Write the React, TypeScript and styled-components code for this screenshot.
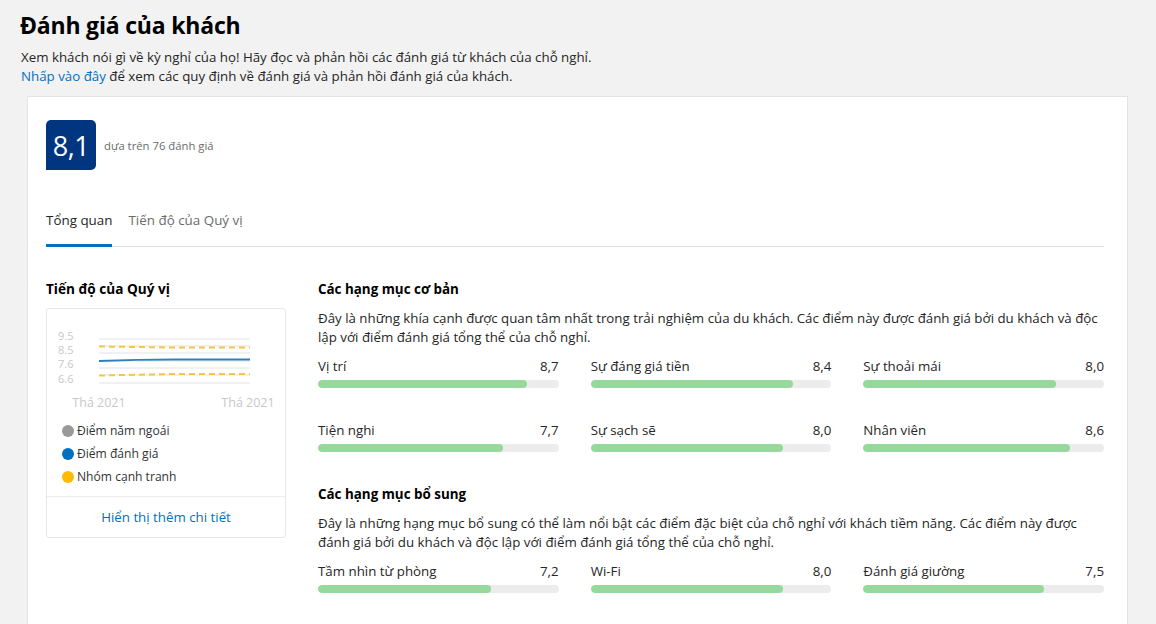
import React from "react";
import styled, { createGlobalStyle } from "styled-components";

const Global = createGlobalStyle`
  html, body { margin: 0; padding: 0; }
  body {
    background: #f2f2f2;
    font-family: "Open Sans", "Noto Sans", Arial, sans-serif;
    color: #262626;
    -webkit-font-smoothing: antialiased;
  }
`;

const Page = styled.div`
  padding: 10px 28px 0 20px;
`;

const Title = styled.h1`
  margin: 0;
  font-size: 23px;
  line-height: 30px;
  font-weight: 700;
  color: #000;
  letter-spacing: -0.2px;
`;

const Intro = styled.p`
  margin: 8px 0 0 1px;
  font-size: 13.3px;
  line-height: 19px;
  color: #262626;
`;

const Link = styled.a`
  color: #0071c2;
  text-decoration: none;
`;

const Card = styled.section`
  margin: 10px 0 0 7px;
  background: #fff;
  border: 1px solid #e3e3e3;
  padding: 23px 23px 40px 18px;
  min-height: 560px;
  box-sizing: border-box;
`;

const ScoreRow = styled.div`
  display: flex;
  align-items: center;
  gap: 8px;
`;

const Badge = styled.div`
  width: 50px;
  height: 50px;
  background: #003580;
  color: #fff;
  border-radius: 5px 5px 5px 0;
  display: flex;
  align-items: center;
  justify-content: center;
  font-size: 27px;
  letter-spacing: -0.5px;
`;

const Based = styled.span`
  font-size: 11.3px;
  color: #6b6b6b;
`;

const Tabs = styled.div`
  display: flex;
  gap: 16px;
  margin-top: 40px;
  border-bottom: 1px solid #dcdcdc;
`;

const Tab = styled.div<{ $active?: boolean }>`
  font-size: 13.4px;
  line-height: 20px;
  padding-bottom: 14px;
  margin-bottom: -1px;
  color: ${(p) => (p.$active ? "#262626" : "#6b6b6b")};
  border-bottom: 3px solid ${(p) => (p.$active ? "#0071c2" : "transparent")};
`;

const Body = styled.div`
  display: grid;
  grid-template-columns: 240px 1fr;
  gap: 32px;
  margin-top: 32px;
`;

const SideTitle = styled.h3`
  margin: 0;
  font-size: 13.6px;
  line-height: 20px;
  font-weight: 700;
  color: #000;
`;

const SideCard = styled.div`
  margin-top: 9px;
  border: 1px solid #e6e6e6;
  border-radius: 3px;
  display: flex;
  flex-direction: column;
`;

const Chart = styled.svg`
  display: block;
  margin-top: 10px;
`;

const Legend = styled.ul`
  list-style: none;
  margin: 9px 0 0;
  padding: 0 0 0 15px;
  display: flex;
  flex-direction: column;
  gap: 3px;
`;

const LegendItem = styled.li`
  display: flex;
  align-items: center;
  gap: 3px;
  font-size: 12.1px;
  line-height: 20px;
  color: #333;
`;

const Dot = styled.span<{ $c: string }>`
  width: 12px;
  height: 12px;
  border-radius: 50%;
  background: ${(p) => p.$c};
`;

const More = styled.a`
  margin-top: 9px;
  border-top: 1px solid #ececec;
  text-align: center;
  font-size: 13.3px;
  line-height: 20px;
  padding: 10px 0 10px;
  color: #0071c2;
  text-decoration: none;
`;

const Main = styled.div`
  display: flex;
  flex-direction: column;
`;

const Section = styled.div`
  & + & {
    margin-top: 32px;
  }
`;

const SectionTitle = styled.h3`
  margin: 0;
  font-size: 13.4px;
  line-height: 20px;
  font-weight: 700;
  color: #000;
`;

const Desc = styled.p`
  margin: 10px 0 0;
  font-size: 13.3px;
  line-height: 19px;
  color: #262626;
`;

const Grid = styled.div`
  display: grid;
  grid-template-columns: repeat(3, 1fr);
  column-gap: 32px;
  row-gap: 32px;
  margin-top: 9px;
`;

const Item = styled.div`
  display: flex;
  flex-direction: column;
`;

const ItemHead = styled.div`
  display: flex;
  justify-content: space-between;
  font-size: 13.3px;
  line-height: 20px;
  color: #262626;
`;

const Track = styled.div`
  margin-top: 4px;
  height: 8px;
  border-radius: 4px;
  background: #ececec;
  overflow: hidden;
`;

const Fill = styled.div`
  height: 100%;
  border-radius: 4px;
  background: #97d89c;
`;

type Cat = { name: string; score: number };

const basic: Cat[] = [
  { name: "Vị trí", score: 8.7 },
  { name: "Sự đáng giá tiền", score: 8.4 },
  { name: "Sự thoải mái", score: 8.0 },
  { name: "Tiện nghi", score: 7.7 },
  { name: "Sự sạch sẽ", score: 8.0 },
  { name: "Nhân viên", score: 8.6 },
];

const extra: Cat[] = [
  { name: "Tầm nhìn từ phòng", score: 7.2 },
  { name: "Wi-Fi", score: 8.0 },
  { name: "Đánh giá giường", score: 7.5 },
];

const fmt = (n: number) => n.toFixed(1).replace(".", ",");

function Categories({ items }: { items: Cat[] }) {
  return (
    <Grid>
      {items.map((c) => (
        <Item key={c.name}>
          <ItemHead>
            <span>{c.name}</span>
            <span>{fmt(c.score)}</span>
          </ItemHead>
          <Track>
            <Fill style={{ width: `${c.score * 10}%` }} />
          </Track>
        </Item>
      ))}
    </Grid>
  );
}

function ProgressChart() {
  const grid = [20, 27, 34, 42, 49, 56, 64];
  const labels = [
    { t: "9.5", y: 21 },
    { t: "8.5", y: 35 },
    { t: "7.6", y: 49 },
    { t: "6.6", y: 64 },
  ];
  return (
    <Chart width={238} height={93} viewBox="0 0 238 93">
      {grid.map((y) => (
        <line key={y} x1={52} x2={203} y1={y} y2={y} stroke="#ececec" strokeWidth={1.5} />
      ))}
      {labels.map((l) => (
        <text key={l.t} x={11} y={l.y} fontSize={11} fill="#c8c8c8" fontFamily="Open Sans, sans-serif">
          {l.t}
        </text>
      ))}
      <path d="M52 27.5 L127 28.5 L203 28.5" fill="none" stroke="#f5c54a" strokeWidth={2} strokeDasharray="6 4" />
      <path d="M52 56.5 L127 55 L203 55" fill="none" stroke="#f5c54a" strokeWidth={2} strokeDasharray="6 4" />
      <path d="M52 42 Q90 40.5 127 40.5 L203 40.5" fill="none" stroke="#2f7fc1" strokeWidth={2} />
      <text x={52} y={88} fontSize={12.5} fill="#c8c8c8" textAnchor="middle" fontFamily="Open Sans, sans-serif">
        Thá 2021
      </text>
      <text x={201} y={88} fontSize={12.5} fill="#c8c8c8" textAnchor="middle" fontFamily="Open Sans, sans-serif">
        Thá 2021
      </text>
    </Chart>
  );
}

export default function App() {
  return (
    <>
      <Global />
      <Page>
        <Title>Đánh giá của khách</Title>
        <Intro>
          Xem khách nói gì về kỳ nghỉ của họ! Hãy đọc và phản hồi các đánh giá từ khách của chỗ nghỉ.
          <br />
          <Link href="#">Nhấp vào đây</Link> để xem các quy định về đánh giá và phản hồi đánh giá của khách.
        </Intro>
        <Card>
          <ScoreRow>
            <Badge>8,1</Badge>
            <Based>dựa trên 76 đánh giá</Based>
          </ScoreRow>
          <Tabs>
            <Tab $active>Tổng quan</Tab>
            <Tab>Tiến độ của Quý vị</Tab>
          </Tabs>
          <Body>
            <div>
              <SideTitle>Tiến độ của Quý vị</SideTitle>
              <SideCard>
                <ProgressChart />
                <Legend>
                  <LegendItem>
                    <Dot $c="#999" />
                    Điểm năm ngoái
                  </LegendItem>
                  <LegendItem>
                    <Dot $c="#0071c2" />
                    Điểm đánh giá
                  </LegendItem>
                  <LegendItem>
                    <Dot $c="#febb02" />
                    Nhóm cạnh tranh
                  </LegendItem>
                </Legend>
                <More href="#">Hiển thị thêm chi tiết</More>
              </SideCard>
            </div>
            <Main>
              <Section>
                <SectionTitle>Các hạng mục cơ bản</SectionTitle>
                <Desc>
                  Đây là những khía cạnh được quan tâm nhất trong trải nghiệm của du khách. Các điểm này được đánh giá bởi du khách và độc lập với điểm đánh giá tổng thể của chỗ nghỉ.
                </Desc>
                <Categories items={basic} />
              </Section>
              <Section>
                <SectionTitle>Các hạng mục bổ sung</SectionTitle>
                <Desc>
                  Đây là những hạng mục bổ sung có thể làm nổi bật các điểm đặc biệt của chỗ nghỉ với khách tiềm năng. Các điểm này được đánh giá bởi du khách và độc lập với điểm đánh giá tổng thể của chỗ nghỉ.
                </Desc>
                <Categories items={extra} />
              </Section>
            </Main>
          </Body>
        </Card>
      </Page>
    </>
  );
}
